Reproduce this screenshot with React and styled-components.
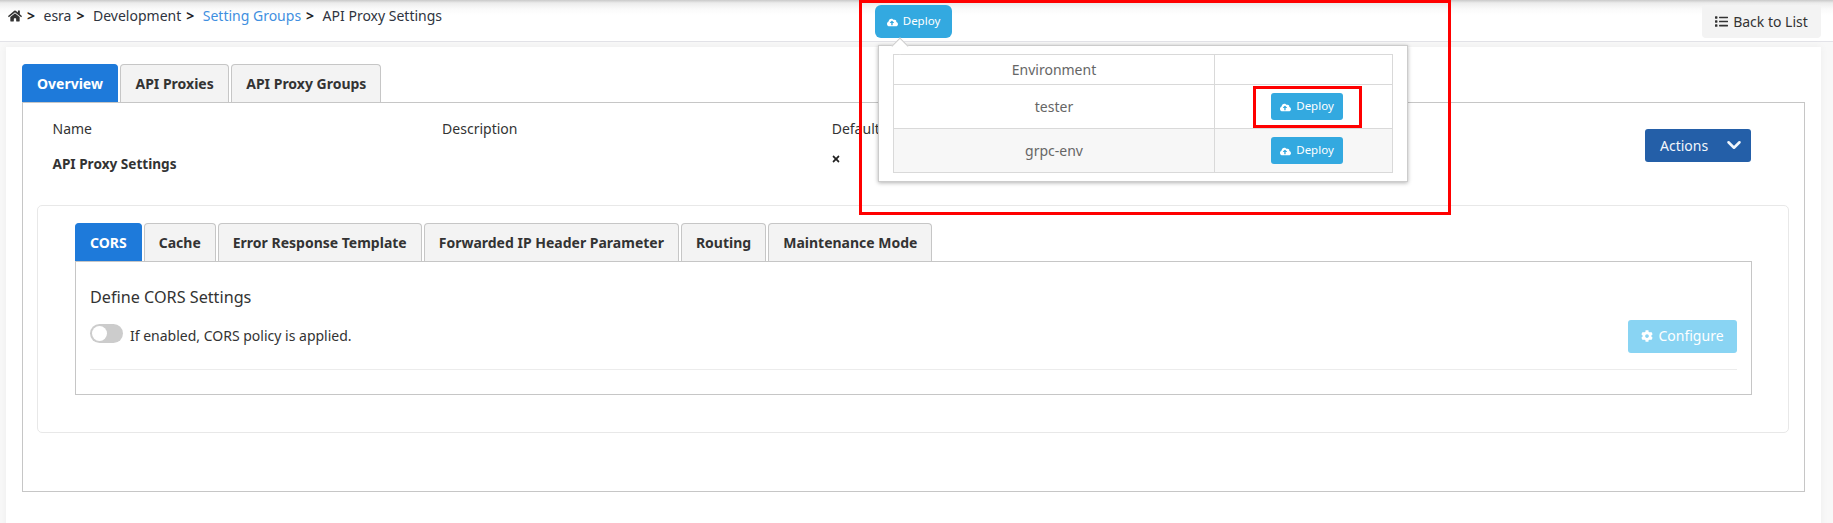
import React from 'react';
import styled, { createGlobalStyle } from 'styled-components';
import { FaHome, FaCloudUploadAlt, FaList, FaCog, FaTimes } from 'react-icons/fa';
import { ChevronDown } from 'lucide-react';

const Global = createGlobalStyle`
  html, body { margin: 0; padding: 0; height: 100%; overflow: hidden; background: #f8f8f8; }
  body { font-family: "Noto Sans", "Open Sans", sans-serif; font-size: 14px; color: #333; }
  * { box-sizing: border-box; }
`;
const Page = styled.div`position: relative; width: 1833px; height: 523px; overflow: hidden;`;
const Header = styled.header`
  height: 42px; padding: 5px 12px 3px 8px; display: flex; align-items: flex-start; justify-content: space-between;
  background: linear-gradient(#c9c9c9 0, #ececec 3px, #fafafa 9px, #fff 15px);
  border-bottom: 1px solid #e3e3e8;
`;
const Crumbs = styled.nav`display: flex; align-items: center; height: 20px; color: #333;`;
const Crumb = styled.span`color: ${p => (p.$link ? '#3f8fe0' : '#2f3440')}; white-space: nowrap;`;
const Sep = styled.b`font-weight: 700; margin: 0 8.5px 0 5px; color: #222;`;
const HomeIcon = styled(FaHome)`width: 14px; height: 14px; color: #333; margin-top: 2px;`;
const BackBtn = styled.button`
  width: 119px; height: 33px; border: 0; border-radius: 4px; background: #f3f3f3; color: #333; padding: 0 0 1px;
  font: 14px "Noto Sans", sans-serif; display: flex; align-items: center; justify-content: center; gap: 5px;
`;
const Card = styled.main`
  margin: 5px 12px 0 6px; padding: 17px 16px 40px; background: #fff; height: 490px;
  box-shadow: 0 0 8px rgba(0,0,0,.05);
`;
const Tabs = styled.div`display: flex; gap: ${p => p.$gap}px; height: 38px;`;
const Tab = styled.div`
  padding: 0 14px; display: flex; align-items: center; font-weight: 700; font-size: 14px; white-space: nowrap;
  border-radius: 4px 4px 0 0;
  background: ${p => (p.$active ? '#1e7ada' : '#f3f3f3')};
  color: ${p => (p.$active ? '#fff' : '#333')};
  border: 1px solid ${p => (p.$active ? '#1e7ada' : '#c6c6c6')}; border-bottom: 0;
`;
const Panel = styled.section`border: 1px solid #c6c6c6; height: 390px; padding: 0 15px 0 14px;`;
const Info = styled.div`display: flex; justify-content: space-between; height: 102px; padding: 0 38px 0 15.5px;`;
const InfoGrid = styled.div`display: grid; grid-template-columns: repeat(3, 389.6px); grid-template-rows: 35px 35px; align-items: center; padding-top: 8px;`;
const Label = styled.div`color: #333; font-size: 14px;`;
const Value = styled.div`font-weight: 700; font-size: 13.6px; color: #333;`;
const Mark = styled(FaTimes)`width: 10px; height: 10px; color: #222; margin: 0 0 10px -1px; display: block;`;
const Actions = styled.button`
  margin-top: 26px; width: 106px; height: 33px; border: 0; border-radius: 3px; background: #245fa8; color: #f2f6fb;
  font: 14px "Noto Sans", sans-serif; display: flex; align-items: center; justify-content: space-between; padding: 0 6px 1px 15px;
`;
const Inner = styled.div`border: 1px solid #e8e8e8; border-radius: 5px; height: 228px; padding: 17px 36px 0 37px;`;
const SubPanel = styled.div`border: 1px solid #c6c6c6; height: 134px; padding: 0 14px;`;
const Row = styled.div`display: flex; justify-content: space-between; height: 108px; border-bottom: 1px solid #ececec;`;
const Heading = styled.h3`margin: 0; font-weight: 400; font-size: 16.2px; line-height: 22px; padding-top: 24px; color: #333;`;
const ToggleLine = styled.div`display: flex; align-items: flex-start; gap: 7px; margin-top: 16px; height: 24px;`;
const Toggle = styled.div`width: 33px; height: 19px; border-radius: 10px; background: #ccc; padding: 2px;`;
const Knob = styled.div`width: 15px; height: 15px; border-radius: 50%; background: #fff;`;
const Hint = styled.span`color: #333; margin-top: 2px; font-size: 14px; line-height: 20px;`;
const Configure = styled.button`
  margin-top: 58px; width: 109px; height: 33px; border: 0; border-radius: 3px; background: #89d4f3; color: #fff; padding: 0 0 2px;
  font: 14px "Noto Sans", sans-serif; display: flex; align-items: center; justify-content: center; gap: 5px;
`;
const Anchor = styled.div`position: absolute; left: 875px; top: 5px;`;
const DeployBtn = styled.button`
  width: ${p => (p.$top ? 77 : 72)}px; height: ${p => (p.$top ? 33 : 27)}px; border: 0; border-radius: ${p => (p.$top ? 6 : 3)}px;
  background: #33a9e0; color: #fff; font: 11.5px "Noto Sans", sans-serif;
  display: inline-flex; align-items: center; justify-content: center; gap: 5px; padding: 0 0 2px;
`;
const Popover = styled.div`
  position: absolute; left: 3px; top: 40px; width: 530px; height: 137px; background: #fff; padding: 8px 14px;
  border: 1px solid #ccc; box-shadow: 0 1px 4px rgba(0,0,0,.3);
  &::before {
    content: ""; position: absolute; left: 15px; top: -6px; width: 11px; height: 11px; background: #fff;
    border-left: 1px solid #ccc; border-top: 1px solid #ccc; transform: rotate(45deg);
  }
`;
const Table = styled.table`width: 499px; border-collapse: collapse; table-layout: fixed; font-size: 14px; color: #666;`;
const Th = styled.th`font-weight: 400; height: 30px; border: 1px solid #d9d9d9; color: #666;`;
const Td = styled.td`
  height: 44px; border: 1px solid #d9d9d9; text-align: center; background: ${p => (p.$alt ? '#f7f7f7' : '#fff')}; vertical-align: middle;
  padding: 0 0 0 ${p => (p.$action ? 7 : 0)}px;
`;
const RedBox = styled.div`position: absolute; border: 3px solid #f00; pointer-events: none;
  left: ${p => p.$x}px; top: ${p => p.$y}px; width: ${p => p.$w}px; height: ${p => p.$h}px;`;
const DeployIcon = styled(FaCloudUploadAlt)`width: 11px; height: 11px; margin-top: 3px;`;

const tabsTop = ['Overview', 'API Proxies', 'API Proxy Groups'];
const tabsSub = ['CORS', 'Cache', 'Error Response Template', 'Forwarded IP Header Parameter', 'Routing', 'Maintenance Mode'];

const Deploy = ({ top }) => <DeployBtn $top={top}><DeployIcon />Deploy</DeployBtn>;

export default function App() {
  return (
    <Page>
      <Global />
      <Header>
        <Crumbs>
          <HomeIcon /><Sep>&gt;</Sep><Crumb>esra</Crumb><Sep>&gt;</Sep><Crumb>Development</Crumb><Sep>&gt;</Sep>
          <Crumb $link>Setting Groups</Crumb><Sep>&gt;</Sep><Crumb>API Proxy Settings</Crumb>
        </Crumbs>
        <BackBtn><FaList size={13} />Back to List</BackBtn>
      </Header>
      <Card>
        <Tabs $gap={2.5}>{tabsTop.map((t, i) => <Tab key={t} $active={i === 0}>{t}</Tab>)}</Tabs>
        <Panel>
          <Info>
            <InfoGrid>
              <Label>Name</Label><Label>Description</Label><Label>Default</Label>
              <Value>API Proxy Settings</Value><div /><div><Mark /></div>
            </InfoGrid>
            <Actions>Actions<ChevronDown size={22} strokeWidth={2.8} /></Actions>
          </Info>
          <Inner>
            <Tabs $gap={2}>{tabsSub.map((t, i) => <Tab key={t} $active={i === 0}>{t}</Tab>)}</Tabs>
            <SubPanel>
              <Row>
                <div>
                  <Heading>Define CORS Settings</Heading>
                  <ToggleLine><Toggle><Knob /></Toggle><Hint>If enabled, CORS policy is applied.</Hint></ToggleLine>
                </div>
                <Configure><FaCog size={12} />Configure</Configure>
              </Row>
            </SubPanel>
          </Inner>
        </Panel>
      </Card>
      <Anchor>
        <Deploy top />
        <Popover>
          <Table>
            <colgroup><col width="321" /><col width="178" /></colgroup>
            <thead><tr><Th>Environment</Th><Th /></tr></thead>
            <tbody>
              <tr><Td>tester</Td><Td $action><Deploy /></Td></tr>
              <tr><Td $alt>grpc-env</Td><Td $alt $action><Deploy /></Td></tr>
            </tbody>
          </Table>
        </Popover>
      </Anchor>
      <RedBox $x={859} $y={0} $w={592} $h={215} />
      <RedBox $x={1253} $y={86} $w={109} $h={42} />
    </Page>
  );
}
